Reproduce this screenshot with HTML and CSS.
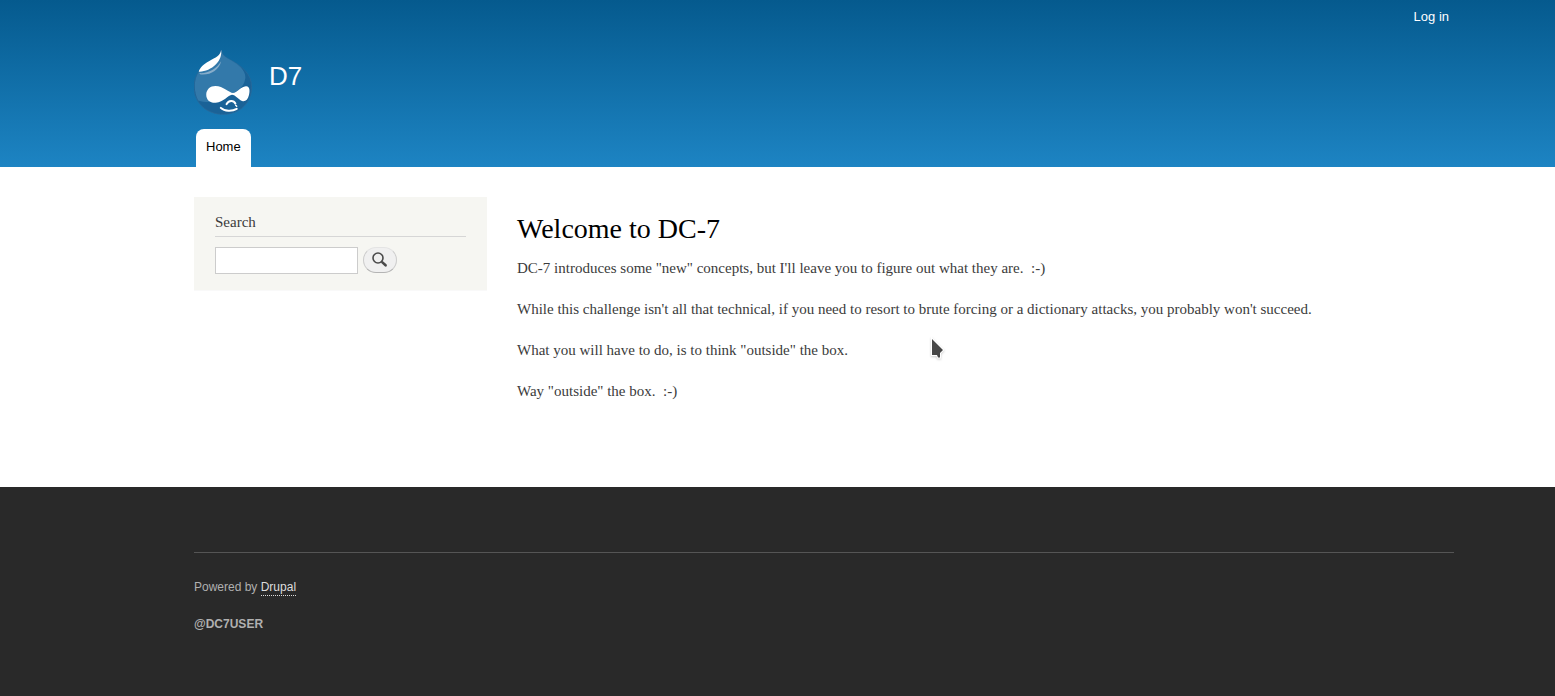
FILE: index.html
```html
<!DOCTYPE html>
<html lang="en">
<head>
<meta charset="utf-8">
<title>Welcome to DC-7 | D7</title>
<link rel="stylesheet" href="styles.css">
</head>
<body>
<header class="header">
  <nav class="account section"><a href="#login">Log in</a></nav>
  <div class="branding section">
    <a class="logo" href="#home" aria-label="Home">
      <svg width="58" height="65" viewBox="13 13 171 192" aria-hidden="true">
        <path fill="#1a6297" stroke="#2c6a98" stroke-width="2" d="M93 12C94 27 107 35 122 43C153 60 183 83 183 122C183 171 146 203 99 203C50 203 13 169 13 122C13 92 27 69 51 53C72 39 90 33 93 12Z"/>
        <path fill="#3379aa" d="M93 14C94 28 108 36 122 43C148 58 168 75 164 99C160 126 135 138 113 151C91 164 59 172 25 162C9 131 13 92 34 68C56 45 88 41 93 14Z"/>
        <path fill="#87adca" d="M28 81C51 84 79 69 93 46C87 72 61 88 32 85Z"/>
        <path fill="#fff" d="M93 13C95 26 91 42 77 56C64 69 44 78 27 77C29 66 42 54 57 46C78 35 91 29 93 13Z"/>
        <path fill="#fff" d="M76 119C99 119 117 139 128 140C139 139 151 122 166 120C179 119 178 136 175 147C172 160 164 167 155 164C145 160 135 145 125 145C113 146 101 167 77 169C60 170 49 160 49 145C49 129 61 119 76 119Z"/>
        <path fill="none" stroke="#fff" stroke-width="6" stroke-linecap="round" d="M109 173C115 161 130 161 135 171M92 184C103 195 126 195 139 187"/>
        <path fill="none" stroke="#fff" stroke-width="4" stroke-linecap="round" d="M136 176L139 179"/>
      </svg>
    </a>
    <a class="site-name" href="#home">D7</a>
  </div>
  <nav class="tabs section"><a class="tab" href="#home">Home</a></nav>
</header>
<div class="main section">
  <aside class="sidebar">
    <form class="search" role="search">
      <h2 class="search-title"><label for="keys">Search</label></h2>
      <div class="search-row">
        <input class="search-input" id="keys" type="search">
        <button class="search-button" type="button" aria-label="Search">
          <svg width="16" height="16" viewBox="0 0 16 16" fill="none" stroke="#4a4a4a" aria-hidden="true"><circle cx="6" cy="6" r="5" stroke-width="1.6"/><path stroke-width="2.6" stroke-linecap="round" d="M10.4 10.4L13.6 13.3"/></svg>
        </button>
      </div>
    </form>
  </aside>
  <main class="content">
    <h1 class="title">Welcome to DC-7</h1>
    <p>DC-7 introduces some "new" concepts, but I'll leave you to figure out what they are.&nbsp; :-)</p>
    <p>While this challenge isn't all that technical, if you need to resort to brute forcing or a dictionary attacks, you probably won't succeed.</p>
    <p>What you will have to do, is to think "outside" the box.</p>
    <p>Way "outside" the box.&nbsp; :-)</p>
  </main>
</div>
<footer class="footer">
  <div class="section">
    <div class="footer-inner">
      <p>Powered by <a class="footer-link" href="#drupal">Drupal</a></p>
      <p><strong>@DC7USER</strong></p>
    </div>
  </div>
</footer>
<svg class="pointer" width="18" height="26" viewBox="0 0 18 26" aria-hidden="true"><path fill="#474747" stroke="#fff" stroke-width="2" paint-order="stroke" d="M4 3V19H9L10 21.500H12V17L15 14Z"/></svg>
</body>
</html>
```
FILE: styles.css
```css
* { box-sizing: border-box; }
body {
  margin: 0;
  min-height: 100vh;
  display: flex;
  flex-direction: column;
  background: #fff;
  color: #3b3b3b;
  font: 15px/23px "Liberation Serif", serif;
}
a { color: inherit; text-decoration: none; }
.section { padding-left: 194px; padding-right: 101px; }
.header {
  background: linear-gradient(to bottom, #055a8e, #1d84c3);
  color: #fffeff;
  font-family: "Liberation Sans", sans-serif;
}
.account {
  display: flex;
  justify-content: flex-end;
  padding-top: 7px;
  font-size: 13px;
  line-height: 20px;
}
.account a { margin-right: 5px; }
.branding { display: flex; gap: 17px; padding-top: 23px; }
.logo, .logo svg { display: block; }
.site-name { padding-top: 10px; font-size: 26px; line-height: 32px; }
.tabs { display: flex; padding-top: 14px; }
.tab {
  margin-left: 2px;
  padding: 8px 10px 10px;
  border-radius: 8px 8px 0 0;
  background: #fff;
  color: #000;
  font-size: 13px;
  line-height: 20px;
}
.main { display: flex; gap: 30px; padding-top: 30px; padding-bottom: 66px; }
.sidebar { flex: 0 0 293px; }
.search {
  padding: 14px 21px 16px;
  border-bottom: 1px solid #f9f9f9;
  background: #f6f6f2;
}
.search-title {
  margin: 0 0 10px;
  padding-bottom: 3px;
  border-bottom: 1px solid #d6d6d6;
  font-size: 15px;
  font-weight: 400;
  line-height: 22px;
}
.search-row { display: flex; gap: 5px; }
.search-input {
  width: 143px;
  height: 27px;
  padding: 4px;
  border: 1px solid #ccc;
  background: #fff;
  appearance: none;
}
.search-button {
  width: 34px;
  height: 26px;
  display: flex;
  align-items: center;
  justify-content: center;
  padding: 0 0 1px;
  border: 1px solid #ccc;
  border-top-color: #e4e4e4;
  border-bottom-color: #b4b4b4;
  border-radius: 13px;
  background: #f0f0f0;
}
.content { flex: 1; min-width: 0; padding-top: 15px; }
.content p { margin: 0 0 18px; }
.title {
  margin: 0 0 11px;
  color: #000;
  font-size: 28px;
  font-weight: 400;
  line-height: 34px;
}
.footer {
  flex: 1;
  padding: 65px 0 40px;
  background: #292929;
  color: #b0b0b0;
  font: 12px/20px "Liberation Sans", sans-serif;
}
.footer-inner { padding-top: 24px; border-top: 1px solid #555; }
.footer p { margin: 0 0 17px; }
.footer-link { padding-bottom: 1px; color: #ddd; border-bottom: 1px dotted #ddd; }
.pointer { position: absolute; left: 928px; top: 336px; filter: drop-shadow(0 1px 1px #0003); }
```
